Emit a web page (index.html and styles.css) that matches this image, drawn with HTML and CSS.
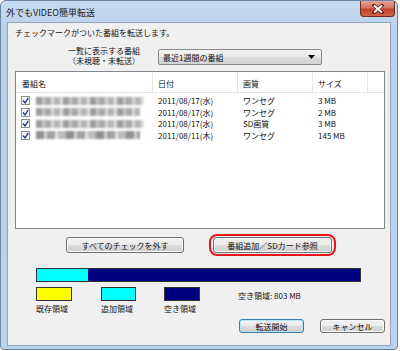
FILE: index.html
```html
<!DOCTYPE html>
<html lang="ja">
<head>
  <meta charset="UTF-8">
  <title>外でもVIDEO簡単転送</title>
  <link rel="stylesheet" href="styles.css">
</head>
<body>
  <div class="window">
    <div class="titlebar">
      <span class="title">外でもVIDEO簡単転送</span>
      <span class="close">
        <svg width="12" height="10" viewBox="0 0 12 10"><path d="M2 1.5 L10 8.5 M10 1.5 L2 8.5" stroke="#5a1d14" stroke-width="3.6" stroke-linecap="round"/><path d="M2 1.5 L10 8.5 M10 1.5 L2 8.5" stroke="#fff" stroke-width="2"/></svg>
      </span>
    </div>

    <div class="client">
      <p class="intro">チェックマークがついた番組を転送します。</p>

      <div class="filter">
        <div class="filter-label">一覧に表示する番組<br>（未視聴・未転送）</div>
        <div class="select">
          <span>最近1週間の番組</span>
          <svg width="7" height="4" viewBox="0 0 7 4"><path d="M0 0 H7 L3.5 4 Z" fill="#000"/></svg>
        </div>
      </div>

      <div class="listbox">
        <div class="lv-row lv-head">
          <div>番組名</div><div>日付</div><div>画質</div><div>サイズ</div><div></div>
        </div>
        <div class="lv-row">
          <div class="name"><span class="check"></span><span class="blur b1"></span></div>
          <div>2011/08/17(水)</div><div>ワンセグ</div><div>3 MB</div><div></div>
        </div>
        <div class="lv-row">
          <div class="name"><span class="check"></span><span class="blur b2"></span></div>
          <div>2011/08/17(水)</div><div>ワンセグ</div><div>2 MB</div><div></div>
        </div>
        <div class="lv-row">
          <div class="name"><span class="check"></span><span class="blur b3"></span></div>
          <div>2011/08/17(水)</div><div>SD画質</div><div>3 MB</div><div></div>
        </div>
        <div class="lv-row">
          <div class="name"><span class="check"></span><span class="blur b4"></span></div>
          <div>2011/08/11(木)</div><div>ワンセグ</div><div>145 MB</div><div></div>
        </div>
      </div>

      <div class="actions">
        <button class="btn btn-clear">すべてのチェックを外す</button>
        <div class="mark">
          <button class="btn btn-add">番組追加／SDカード参照</button>
        </div>
      </div>

      <div class="usage">
        <div class="used" style="width: 51px"></div>
      </div>

      <div class="legend">
        <div class="item w1"><span class="swatch yellow"></span><span>既存領域</span></div>
        <div class="item w2"><span class="swatch cyan"></span><span>追加領域</span></div>
        <div class="item w3"><span class="swatch navy"></span><span>空き領域</span></div>
        <div class="free">空き領域: 803 MB</div>
      </div>

      <div class="footer">
        <button class="btn btn-small default">転送開始</button>
        <button class="btn btn-small">キャンセル</button>
      </div>
    </div>
  </div>
</body>
</html>
```

FILE: styles.css
```css
body {
  margin: 0;
  background: #fff;
  font-family: "Noto Sans CJK JP", "Liberation Sans", sans-serif;
  font-size: 8px;
  color: #111;
}
.window {
  width: 396px;
  height: 348px;
  border: 1px solid #6b84a3;
  border-radius: 6px 6px 4px 4px;
  background: linear-gradient(#c6dbf1, #b9d1ea 30px, #bcd3ec);
  display: flex;
  flex-direction: column;
}
.titlebar {
  height: 21px;
  display: flex;
  justify-content: space-between;
  align-items: flex-start;
}
.title {
  margin: 5px 0 0 5px;
  font-size: 9px;
  color: #222;
}
.close {
  width: 35px;
  height: 16px;
  margin-right: 2px;
  border: 1px solid #6d2c22;
  border-top: none;
  border-radius: 0 0 4px 4px;
  background: linear-gradient(#e6a397, #d27564 45%, #c23f2a 55%, #d0654f);
  display: flex;
  align-items: center;
  justify-content: center;
  box-sizing: border-box;
}
.client {
  margin: 0 6px 0 6px;
  height: 322px;
  border: 1px solid #8fa4bf;
  background: #f0f0f0;
}
.intro {
  margin: 4px 0 0 7px;
  line-height: 12px;
}
.filter {
  display: flex;
  margin-top: 7px;
}
.filter-label {
  width: 132px;
  text-align: right;
  line-height: 10px;
}
.select {
  margin: 3px 0 0 18px;
  width: 164px;
  height: 16px;
  box-sizing: border-box;
  border: 1px solid #8a8a8a;
  border-radius: 2px;
  background: linear-gradient(#f4f4f4, #e8e8e8 50%, #dcdcdc 50%, #d3d3d3);
  display: flex;
  align-items: center;
  justify-content: space-between;
  padding: 0 6px 0 4px;
}
.listbox {
  margin: 5px 0 0 7px;
  width: 370px;
  height: 158px;
  box-sizing: border-box;
  border: 1px solid #828790;
  background: #fff;
}
.lv-row {
  display: grid;
  grid-template-columns: 137px 85px 75px 55px 1fr;
  height: 11.5px;
  line-height: 11.5px;
}
.lv-row > div {
  padding-left: 5px;
  white-space: nowrap;
}
.lv-head {
  height: 20px;
  margin-bottom: 2px;
  border-bottom: 1px solid #e5e5e5;
}
.lv-head > div {
  border-right: 1px solid #e5e5e5;
  line-height: 16px;
  padding-top: 4px;
}
.lv-head > div:first-child {
  padding-left: 6px;
}
.lv-head > div:last-child {
  border-right: none;
}
.name {
  display: flex;
  align-items: center;
}
.check {
  width: 9px;
  height: 9px;
  box-sizing: border-box;
  border: 1px solid #8e8f8f;
  background: #f4f4f4 url("data:image/svg+xml,%3Csvg xmlns='http://www.w3.org/2000/svg' width='7' height='7'%3E%3Cpath d='M1 3.5 L3 5.8 L6.3 0.8' fill='none' stroke='%23213f8e' stroke-width='1.4'/%3E%3C/svg%3E") center no-repeat;
  margin-right: 6px;
}
.blur {
  height: 8px;
  filter: blur(1px);
  background: repeating-linear-gradient(90deg, #9c9c9c 0 6px, #c6c6c6 6px 9px, #a8a8a8 9px 15px, #d8d8d8 15px 18px, #b4b4b4 18px 24px, #e0e0e0 24px 27px);
}
.b1 { width: 108px; }
.b2 { width: 104px; }
.b3 { width: 108px; }
.b4 { width: 104px; background: repeating-linear-gradient(90deg, #8e8e8e 0 8px, #d4d4d4 8px 11px, #a0a0a0 11px 19px, #e2e2e2 19px 22px, #bcbcbc 22px 30px); }
.actions {
  margin-top: 3px;
  height: 26px;
  display: flex;
  align-items: center;
}
.btn {
  font-family: inherit;
  font-size: 8px;
  color: #111;
  border: 1px solid #707070;
  border-radius: 3px;
  background: linear-gradient(#f2f2f2, #ebebeb 50%, #dddddd 50%, #cfcfcf);
  padding: 0;
  height: 16px;
  box-shadow: inset 0 0 0 1px #fbfbfb;
}
.btn-clear {
  width: 118px;
  margin-left: 58px;
}
.mark {
  margin-left: 25px;
  border: 2px solid #e8141b;
  border-radius: 8px;
  padding: 1px 2px;
}
.btn-add {
  width: 119px;
  display: block;
}
.usage {
  margin: 10px 0 0 28px;
  width: 325px;
  height: 14px;
  box-sizing: border-box;
  border: 1px solid #333;
  background: #000080;
}
.used {
  height: 100%;
  background: #00ffff;
}
.legend {
  display: flex;
  margin: 5px 0 0 28px;
}
.item {
  display: flex;
  flex-direction: column;
}
.w1 { width: 65px; }
.w2 { width: 63px; }
.w3 { width: 74px; }
.swatch {
  width: 36px;
  height: 14px;
  box-sizing: border-box;
  border: 1px solid #333;
  margin-bottom: 2px;
}
.yellow { background: #ffff00; }
.cyan { background: #00ffff; width: 35px; }
.navy { background: #000080; }
.item span:last-child {
  line-height: 11px;
}
.free {
  margin-top: 3px;
  line-height: 11px;
}
.footer {
  display: flex;
  justify-content: flex-end;
  gap: 16px;
  margin: 5px 5px 0 0;
}
.btn-small {
  width: 65px;
  height: 14px;
}
.default {
  border-color: #3c7fb1;
  box-shadow: inset 0 0 0 1px #b9e4f8;
}
```
